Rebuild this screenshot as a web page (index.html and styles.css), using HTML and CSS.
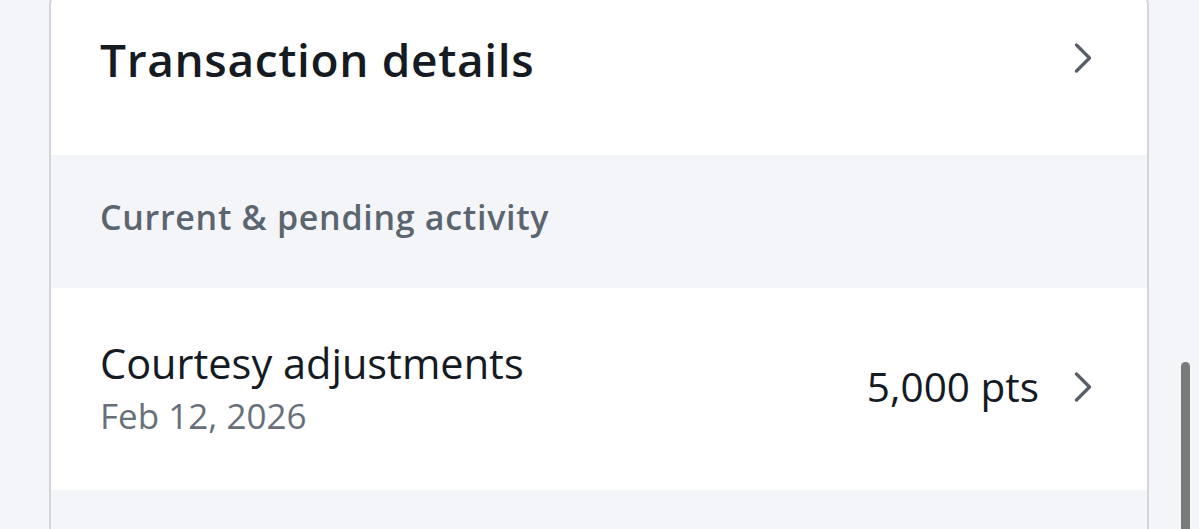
FILE: index.html
```html
<!DOCTYPE html>
<html>
<head>
<meta charset="utf-8">
<link rel="stylesheet" href="styles.css">
</head>
<body>
<div class="page">
  <div class="card">
    <div class="header">
      <h1 class="title">Transaction details</h1>
      <svg class="chev" viewBox="0 0 18 30" width="18" height="30"><path d="M2.5 2 L15.5 15 L2.5 28" fill="none" stroke="#595f67" stroke-width="3.3" stroke-linecap="round" stroke-linejoin="round"/></svg>
    </div>
    <div class="section">
      <div class="section-label">Current &amp; pending activity</div>
    </div>
    <div class="row">
      <div class="row-main">
        <div class="row-title">Courtesy adjustments</div>
        <div class="row-date">Feb 12, 2026</div>
      </div>
      <div class="row-side">
        <div class="row-amount">5,000 pts</div>
        <svg class="chev" viewBox="0 0 18 30" width="18" height="30"><path d="M2.5 2 L15.5 15 L2.5 28" fill="none" stroke="#595f67" stroke-width="3.3" stroke-linecap="round" stroke-linejoin="round"/></svg>
      </div>
    </div>
    <div class="section tail"></div>
  </div>
  <div class="scrollbar"></div>
</div>
</body>
</html>
```
FILE: styles.css
```css
html, body {
  margin: 0;
  padding: 0;
  background: #f4f5f9;
  height: 100%;
  overflow: hidden;
  font-family: "Open Sans", "Noto Sans", sans-serif;
}
.page {
  position: relative;
  display: flow-root;
  height: 529px;
  overflow: hidden;
}
.card {
  margin-left: 49px;
  width: 1096px;
  margin-top: -12px;
  border: 2px solid #d2d5da;
  border-bottom: none;
  border-radius: 18px 18px 0 0;
  background: #ffffff;
  overflow: hidden;
}
.header {
  height: 165px;
  box-sizing: border-box;
  padding: 39px 55px 0 49px;
  display: flex;
  align-items: flex-start;
  justify-content: space-between;
}
.title {
  margin: 0;
  font-size: 46px;
  line-height: 60px;
  font-weight: 600;
  color: #151a23;
  letter-spacing: 0.65px;
}
.header .chev {
  margin-top: 14px;
}
.chev {
  display: block;
  flex: none;
}
.section {
  background: #f4f5f9;
  height: 133px;
  box-sizing: border-box;
  padding-left: 49px;
  padding-top: 42px;
}
.section-label {
  font-size: 34px;
  line-height: 40px;
  font-weight: 600;
  letter-spacing: 0.7px;
  color: #5b6570;
}
.row {
  height: 202px;
  box-sizing: border-box;
  padding: 50px 55px 0 49px;
  display: flex;
  align-items: flex-start;
}
.row-main {
  flex: 1;
}
.row-title {
  font-size: 41.5px;
  line-height: 50px;
  color: #151a23;
}
.row-date {
  font-size: 35px;
  line-height: 48px;
  margin-top: 4px;
  color: #67707a;
}
.row-side {
  display: flex;
  align-items: center;
  gap: 35px;
  margin-top: 24px;
}
.row-amount {
  font-size: 40.5px;
  line-height: 50px;
  color: #151a23;
}
.tail {
  height: 40px;
}
.scrollbar {
  position: absolute;
  left: 1181px;
  top: 362px;
  width: 9px;
  height: 180px;
  border-radius: 5px;
  background: #7a7a7a;
}
```
